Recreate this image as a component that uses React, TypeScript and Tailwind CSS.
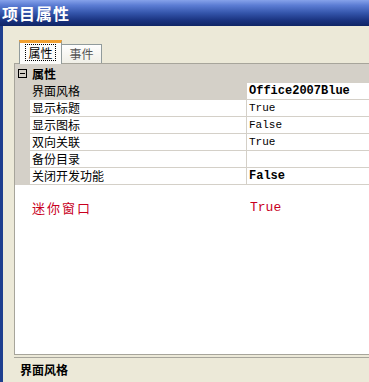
import React from "react";

// property rows shown under the "属性" category
const rows = [
  { label: "界面风格", value: "Office2007Blue", bold: true, selected: true },
  { label: "显示标题", value: "True" },
  { label: "显示图标", value: "False" },
  { label: "双向关联", value: "True" },
  { label: "备份目录", value: "" },
  { label: "关闭开发功能", value: "False", bold: true },
];

const cjk = "font-['SimSun','Noto_Sans_CJK_SC',sans-serif]";
const mono = "font-['Liberation_Mono','Courier_New',monospace]";

export default function App() {
  return (
    <div
      className={`flex h-[382px] w-[369px] flex-col overflow-hidden bg-[#ece9d8] ${cjk}`}
    >
      {/* title bar */}
      <div className="h-[26px] shrink-0 bg-[linear-gradient(to_bottom,#86a2ea_0%,#5c7dd4_20%,#3455ab_50%,#1a3380_78%,#0f2565_100%)] pl-[2px] pt-[3px] text-[16px] leading-[20px] font-bold tracking-[1px] text-white">
        项目属性
      </div>

      <div className="flex flex-1">
        <div className="w-[3px] bg-[#1f3f8f]" />

        <div className="flex flex-1 flex-col pl-[11px]">
          {/* tabs */}
          <div className="flex h-[37px] shrink-0 items-end pl-[5px]">
            <div className="relative z-10 -mb-[1px] flex h-[24px] w-[43px] justify-center border-t-[3px] border-r border-l border-t-[#f0a030] border-r-[#919b9c] border-l-[#919b9c] bg-[#fcfcfa] pt-[1px]">
              <span className="h-[17px] border border-dotted border-black px-[2px] text-[12px] leading-[15px] text-black">
                属性
              </span>
            </div>
            <div className="flex h-[19px] w-[40px] justify-center border-t border-r border-t-[#919b9c] border-r-[#919b9c] bg-[linear-gradient(to_bottom,#fefefe,#f0efe7)] pt-[1px] text-[12px] leading-[15px] text-[#555]">
              事件
            </div>
          </div>

          {/* property grid */}
          <div className="flex h-[291px] shrink-0 flex-col border-t border-l border-t-[#a7a59b] border-l-[#a7a59b] bg-white">
            <div className="flex h-[19px] items-center bg-[#d4d0c8]">
              <div className="flex w-[15px] justify-center">
                <div className="flex h-[9px] w-[9px] items-center justify-center border border-black">
                  <div className="h-[1px] w-[5px] bg-black" />
                </div>
              </div>
              <span className="pl-[2px] text-[12px] font-bold text-black">属性</span>
            </div>

            {rows.map((r, i) => (
              <div key={i} className="flex h-[17px] border-b border-[#d4d0c8]">
                <div className="w-[15px] bg-[#d4d0c8]" />
                <div
                  className={`w-[216px] pl-[2px] text-[12px] leading-[16px] text-black ${
                    r.selected ? "bg-[#d4d0c8]" : ""
                  }`}
                >
                  {r.label}
                </div>
                <div
                  className={`flex-1 border-l border-[#d4d0c8] pl-[2px] leading-[16px] text-black ${mono} ${
                    r.bold ? "text-[12px] font-bold" : "text-[11px]"
                  }`}
                >
                  {r.value}
                </div>
              </div>
            ))}

            <div className="flex pt-[15px] text-[#c8001e]">
              <div className="w-[17px]" />
              <div className="w-[216px] text-[13px] leading-[16px] tracking-[2px]">迷你窗口</div>
              <div className={`pl-[2px] text-[13px] leading-[16px] ${mono}`}>True</div>
            </div>
          </div>

          {/* description */}
          <div className="h-[4px] shrink-0 border-t border-b border-[#a7a59b]" />
          <div className="pt-[3px] pl-[6px] text-[12px] font-bold text-black">界面风格</div>
        </div>
      </div>
    </div>
  );
}
